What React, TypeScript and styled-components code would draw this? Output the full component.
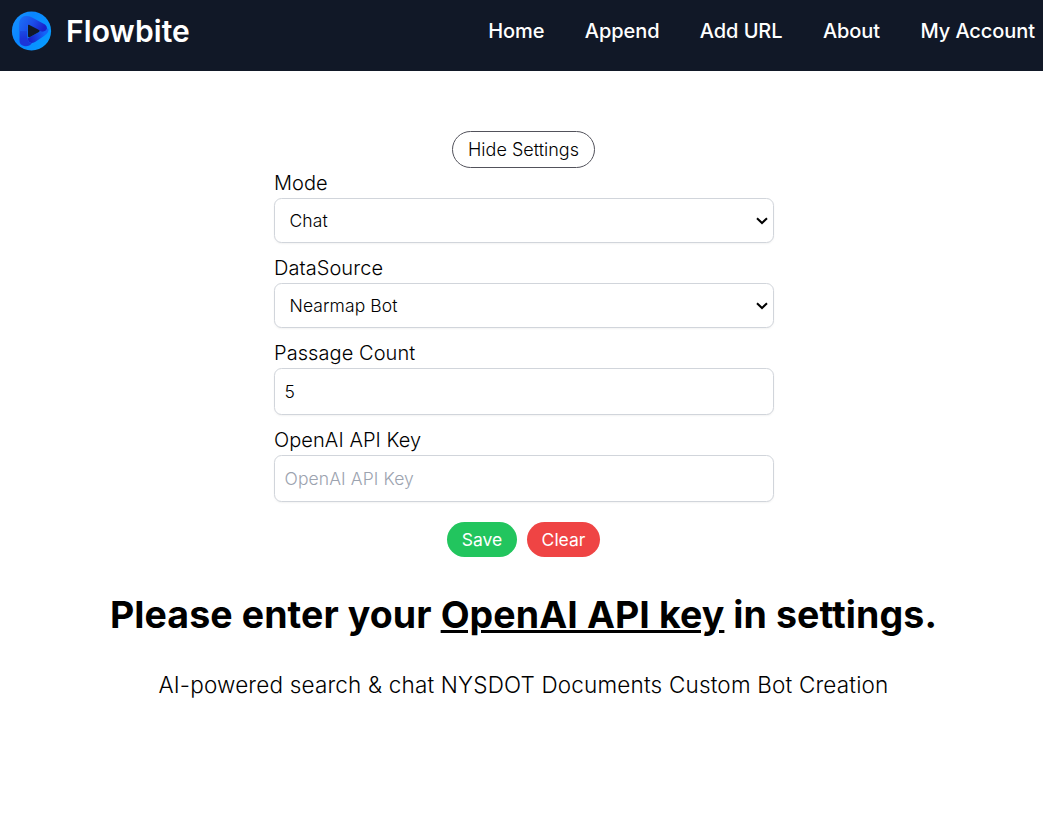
import React, { useState } from "react";
import styled, { createGlobalStyle } from "styled-components";

const GlobalStyle = createGlobalStyle`
  *, *::before, *::after { box-sizing: border-box; }
  body {
    margin: 0;
    background: #fff;
    color: #000;
    font-family: Inter, "Liberation Sans", sans-serif;
    font-weight: 300;
    font-size: 20px;
    line-height: 30px;
  }
  a { color: inherit; text-decoration: none; }
  button, input, select { font: inherit; color: inherit; margin: 0; }
`;

const Header = styled.header`
  display: flex;
  justify-content: space-between;
  align-items: flex-start;
  height: 71px;
  padding: 11px 8px 0 11px;
  background: #111827;
  color: #fff;
`;

const Brand = styled.a`
  display: flex;
  align-items: center;
  gap: 14px;
  height: 40px;
  font-size: 30px;
  font-weight: 600;
  letter-spacing: 0.1px;
`;

const Nav = styled.nav`
  display: flex;
  gap: 40.4px;
  height: 40px;
  align-items: center;
  font-weight: 500;
  letter-spacing: -0.07px;
`;

const Main = styled.main`
  display: flex;
  flex-direction: column;
  align-items: center;
  padding: 60px 0 0 4px;
`;

const Toggle = styled.button`
  height: 37px;
  width: 143px;
  margin-right: 1px;
  padding: 0 0 0 1px;
  border: 1px solid #52525b;
  border-radius: 19px;
  background: #fff;
  font-size: 18px;
  font-weight: 350;
  line-height: 25px;
`;

const Form = styled.form`
  display: flex;
  flex-direction: column;
  gap: 10px;
  width: 500px;
  margin-left: 1px;
`;

const Field = styled.label`
  display: grid;
  grid-template-rows: 30px auto;
  letter-spacing: 0.07px;
`;

const SelectWrap = styled.span`
  display: grid;
  align-items: center;

  > * { grid-area: 1 / 1; }
  > svg { justify-self: end; margin: 0 5px 0 0; pointer-events: none; }
`;

const Control = styled.input<{ $select?: boolean }>`
  appearance: none;
  width: 100%;
  height: ${(p) => (p.$select ? 45 : 47)}px;
  padding: 0 ${(p) => (p.$select ? 14.5 : 9.5)}px;
  border: 1px solid #d1d5db;
  border-radius: 7.5px;
  background: #fff;
  box-shadow: 0 1px 2px rgba(0, 0, 0, 0.05);
  font-size: 17.5px;
  font-weight: 350;
  letter-spacing: 0.1px;
  outline: none;

  &::placeholder { color: #9ca3af; opacity: 1; }
`;

const Actions = styled.div`
  display: flex;
  justify-content: center;
  gap: 10px;
  margin: 10px 2px 0 0;
`;

const Pill = styled.button<{ $color: string; $width: number }>`
  width: ${(p) => p.$width}px;
  height: 35px;
  padding: 0 0 0 1px;
  border: 0;
  border-radius: 18px;
  background: ${(p) => p.$color};
  color: #fff;
  font-size: 17.5px;
  font-weight: 400;
  line-height: 25px;
`;

const Title = styled.h1`
  margin: 34px 0 0;
  font-size: 37.5px;
  line-height: 47px;
  font-weight: 700;
  letter-spacing: 0.09px;
  white-space: nowrap;

  a { text-decoration: underline; }
`;

const Tagline = styled.p`
  margin: 29px 0 0;
  font-size: 22.5px;
  line-height: 35px;
  letter-spacing: 0.175px;
  white-space: nowrap;
`;

const Logo = () => (
  <svg width="41" height="40" viewBox="0 0 41 40" aria-hidden="true">
    <defs>
      <linearGradient id="ring" x1="0" y1="0.2" x2="1" y2="0.8">
        <stop offset="0" stopColor="#1590ff" />
        <stop offset="0.35" stopColor="#0a86ff" />
        <stop offset="1" stopColor="#069cff" />
      </linearGradient>
      <linearGradient id="top" gradientUnits="userSpaceOnUse" x1="10" y1="7" x2="31" y2="20">
        <stop offset="0" stopColor="#1a6cf6" />
        <stop offset="0.5" stopColor="#1c4fea" />
        <stop offset="1" stopColor="#1a22cb" />
      </linearGradient>
      <linearGradient id="left" gradientUnits="userSpaceOnUse" x1="14" y1="27" x2="10" y2="8">
        <stop offset="0" stopColor="#1b35d8" />
        <stop offset="1" stopColor="#1a6cf6" />
      </linearGradient>
      <linearGradient id="right" gradientUnits="userSpaceOnUse" x1="34" y1="24" x2="19" y2="28">
        <stop offset="0" stopColor="#1463f8" />
        <stop offset="1" stopColor="#1a20c6" />
      </linearGradient>
    </defs>
    <circle cx="20.5" cy="20" r="19.6" fill="url(#ring)" />
    <path d="M8.5 30V13Q8.5 5 16 5L20 9L16.5 14V27Q17 32 21 32Q18 36 13 35Q8.5 34 8.5 30Z" fill="url(#left)" />
    <path d="M8.5 13Q8.5 4.5 16 5Q19 5 22 7L34 13.5Q38 17 34 21.5L29 20.5L19 14.3Q16 13 16.5 16L16.5 20H8.5Z" fill="url(#top)" />
    <path d="M37 17Q39 21 33 25L24 31Q17.5 34 16.5 27Q17 27.5 19 26L29 20.5Q33 22 37 17Z" fill="url(#right)" />
    <path d="M17 14.5Q17 13.2 18.5 14L28 19Q29.5 20 28 21L19 26Q17 27 17 25Z" fill="#111827" />
  </svg>
);

const Chevron = () => (
  <svg width="14" height="10" viewBox="0 0 14 10" aria-hidden="true">
    <path d="M2 2.2L7 7L12 2.2" fill="none" stroke="#000" strokeWidth="2" />
  </svg>
);

const SelectField = ({ label, value }: { label: string; value: string }) => (
  <Field>
    {label}
    <SelectWrap>
      <Control as="select" $select defaultValue={value}>
        <option>{value}</option>
      </Control>
      <Chevron />
    </SelectWrap>
  </Field>
);

const links = ["Home", "Append", "Add URL", "About", "My Account"];

export default function App() {
  const [count, setCount] = useState("5");
  const [apiKey, setApiKey] = useState("");

  return (
    <>
      <GlobalStyle />
      <Header>
        <Brand href="#"><Logo />Flowbite</Brand>
        <Nav>{links.map((link) => <a key={link} href="#">{link}</a>)}</Nav>
      </Header>
      <Main>
        <Toggle type="button">Hide Settings</Toggle>
        <Form onSubmit={(e) => e.preventDefault()}>
          <SelectField label="Mode" value="Chat" />
          <SelectField label="DataSource" value="Nearmap Bot" />
          <Field>
            Passage Count
            <Control value={count} onChange={(e) => setCount(e.target.value)} />
          </Field>
          <Field>
            OpenAI API Key
            <Control placeholder="OpenAI API Key" value={apiKey} onChange={(e) => setApiKey(e.target.value)} />
          </Field>
          <Actions>
            <Pill $color="#22c55e" $width={70}>Save</Pill>
            <Pill $color="#ef4444" $width={73} type="button" onClick={() => setApiKey("")}>Clear</Pill>
          </Actions>
        </Form>
        <Title>Please enter your <a href="#">OpenAI API key</a> in settings.</Title>
        <Tagline>AI-powered search &amp; chat NYSDOT Documents Custom Bot Creation</Tagline>
      </Main>
    </>
  );
}
